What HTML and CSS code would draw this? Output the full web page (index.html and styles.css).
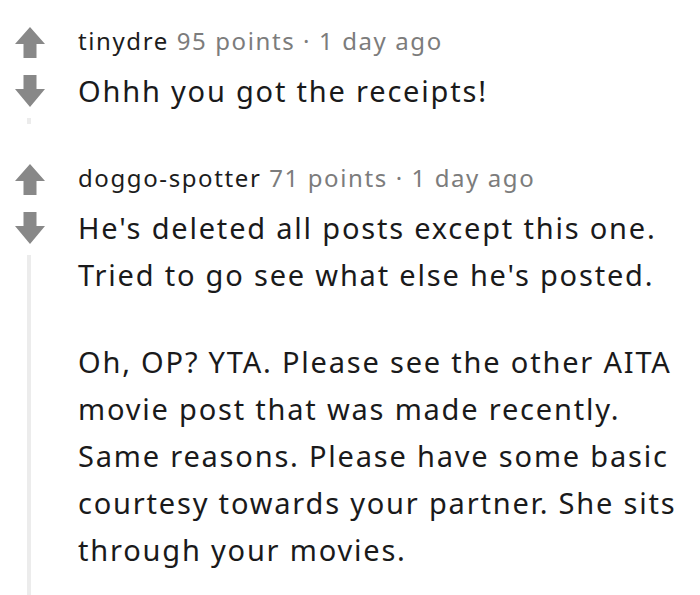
FILE: index.html
```html
<!DOCTYPE html>
<html lang="en">
<head>
    <meta charset="UTF-8">
    <meta name="viewport" content="width=device-width, initial-scale=1.0">
    <title>Comments</title>
    <link rel="stylesheet" href="styles.css">
</head>
<body>
    <div class="comments">

        <div class="comment">
            <div class="votes">
                <svg class="arrow" width="30" height="31" viewBox="0 0 30 31">
                    <polygon points="15,0 30,17 21.5,17 21.5,31 8.5,31 8.5,17 0,17" />
                </svg>
                <svg class="arrow arrow-down" width="30" height="32" viewBox="0 0 30 32">
                    <polygon points="8.5,0 21.5,0 21.5,14 30,14 15,32 0,14 8.5,14" />
                </svg>
                <div class="thread-line"></div>
            </div>
            <div class="content">
                <div class="meta">
                    <span class="author">tinydre</span>
                    <span class="info">95 points · 1 day ago</span>
                </div>
                <div class="text">
                    <p>Ohhh you got the receipts!</p>
                </div>
            </div>
        </div>

        <div class="comment">
            <div class="votes">
                <svg class="arrow" width="30" height="31" viewBox="0 0 30 31">
                    <polygon points="15,0 30,17 21.5,17 21.5,31 8.5,31 8.5,17 0,17" />
                </svg>
                <svg class="arrow arrow-down" width="30" height="32" viewBox="0 0 30 32">
                    <polygon points="8.5,0 21.5,0 21.5,14 30,14 15,32 0,14 8.5,14" />
                </svg>
                <div class="thread-line"></div>
            </div>
            <div class="content">
                <div class="meta">
                    <span class="author">doggo-spotter</span>
                    <span class="info">71 points · 1 day ago</span>
                </div>
                <div class="text">
                    <p>He's deleted all posts except this one. Tried to go see what else he's posted.</p>
                    <p>Oh, OP? YTA. Please see the other AITA movie post that was made recently. Same reasons. Please have some basic courtesy towards your partner. She sits through your movies.</p>
                </div>
            </div>
        </div>

    </div>
</body>
</html>
```

FILE: styles.css
```css
* {
    box-sizing: border-box;
}

body {
    margin: 0;
    background-color: #fff;
    font-family: "Noto Sans", "Open Sans", sans-serif;
    color: #1a1a1b;
}

.comments {
    padding-top: 25px;
}

.comment {
    display: flex;
    margin-bottom: 38px;
}

.comment:last-child {
    margin-bottom: 0;
}

/* vote column */
.votes {
    width: 60px;
    flex-shrink: 0;
    display: flex;
    flex-direction: column;
    align-items: center;
    padding-top: 2px;
}

.arrow {
    display: block;
    fill: #888;
}

.arrow-down {
    margin-top: 17px;
}

.thread-line {
    flex: 1;
    width: 4px;
    margin-top: 11px;
    margin-right: 2px;
    background-color: #ececec;
}

/* comment body */
.content {
    flex: 1;
    padding-left: 18px;
    padding-right: 4px;
    padding-bottom: 10px;
}

.comment:last-child .content {
    padding-bottom: 40px;
}

.meta {
    font-size: 24px;
    line-height: 32px;
    letter-spacing: 1.6px;
    white-space: nowrap;
}

.author {
    color: #1c1c1c;
}

.info {
    color: #7c7c7c;
}

.text {
    margin-top: 10px;
    font-size: 29px;
    line-height: 47px;
    letter-spacing: 1.8px;
}

.text p {
    margin: 0;
}

.text p + p {
    margin-top: 40px;
}
```
